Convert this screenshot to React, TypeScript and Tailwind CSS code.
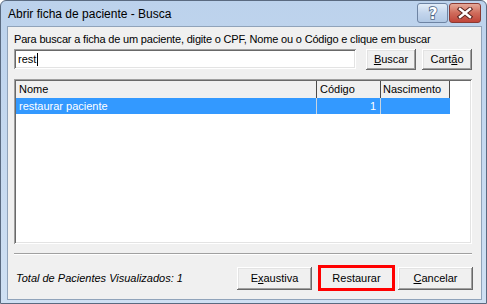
import React from "react";

const raised =
  "shadow-[inset_-1px_-1px_#696969,inset_1px_1px_#ffffff,inset_-2px_-2px_#a0a0a0,inset_2px_2px_#e3e3e3]";
const sunken =
  "shadow-[inset_1px_1px_#a0a0a0,inset_-1px_-1px_#ffffff,inset_2px_2px_#696969,inset_-2px_-2px_#e3e3e3]";

function WinButton({ children, className = "" }: { children: React.ReactNode; className?: string }) {
  return (
    <div className={`flex items-center justify-center bg-[#f0f0f0] text-black ${raised} ${className}`}>
      {children}
    </div>
  );
}

function HelpButton() {
  return (
    <div className="flex h-[20px] w-[31px] items-center justify-center rounded-[3px] border border-[#6e84a3] bg-gradient-to-b from-[#e3edf8] via-[#c3d5ec] to-[#b1c8e4]">
      <svg width="14" height="17" viewBox="0 0 14 17">
        <text
          x="7"
          y="14"
          textAnchor="middle"
          fontFamily="'DejaVu Sans', sans-serif"
          fontWeight="bold"
          fontSize="15"
          fill="#ffffff"
          stroke="#4f6584"
          strokeWidth="1.6"
          paintOrder="stroke"
        >
          ?
        </text>
      </svg>
    </div>
  );
}

function CloseButton() {
  return (
    <div className="flex h-[20px] w-[32px] items-center justify-center rounded-[3px] border border-[#8a3a33] bg-gradient-to-b from-[#e4a999] via-[#cf6b5b] to-[#c0453a]">
      <svg width="16" height="12" viewBox="0 0 16 12">
        <path d="M3 2 L13 10 M13 2 L3 10" stroke="#5a241f" strokeWidth="4.4" strokeLinecap="square" />
        <path d="M3 2 L13 10 M13 2 L3 10" stroke="#ffffff" strokeWidth="2.4" strokeLinecap="square" />
      </svg>
    </div>
  );
}

export default function App() {
  return (
    <div className="h-[304px] w-[487px] overflow-hidden bg-white font-['Liberation_Sans',Arial,sans-serif] text-[11px] leading-[13px] text-black">
      <div className="flex h-[304px] w-[487px] flex-col rounded-t-[6px] border border-[#5a6a80] bg-gradient-to-b from-[#bcd2ec] to-[#cfe0f3] pb-[3px] pl-[6px] pr-[4px]">
        {/* title bar */}
        <div className="flex h-[25px] items-center justify-between">
          <span className="mt-[1px] pl-[1px] text-[12px] text-black">Abrir ficha de paciente - Busca</span>
          <div className="mr-[1px] flex items-start gap-[1px] self-start pt-[2px]">
            <HelpButton />
            <CloseButton />
          </div>
        </div>

        {/* client area */}
        <div className="flex flex-1 flex-col border border-[#90a3ba] bg-[#f0f0f0] pb-[7px] pl-[6px] pr-[8px] pt-[6px]">
          <div className="h-[13px] whitespace-nowrap tracking-[-0.18px]">
            Para buscar a ficha de um paciente, digite o CPF, Nome ou o Código e clique em buscar
          </div>

          <div className="mt-[3px] flex items-start">
            <div className={`flex h-[20px] w-[342px] items-center bg-white pl-[4px] ${sunken}`}>
              <span>rest</span>
              <span className="ml-[1px] h-[13px] w-[1px] bg-black" />
            </div>
            <WinButton className="ml-[10px] h-[21px] w-[50px]">
              <span>
                <span className="underline">B</span>uscar
              </span>
            </WinButton>
            <WinButton className="ml-[6px] h-[21px] w-[50px]">
              <span>
                Cart<span className="underline">ã</span>o
              </span>
            </WinButton>
          </div>

          {/* list */}
          <div className={`mt-[9px] h-[165px] w-[458px] bg-white p-[2px] ${sunken}`}>
            <div className="flex h-[17px]">
              <div className="flex w-[301px] items-center border-r border-[#4a4a4a] bg-[#f0f0f0] pl-[3px]">Nome</div>
              <div className="flex w-[64px] items-center border-r border-[#4a4a4a] bg-[#f0f0f0] pl-[3px]">Código</div>
              <div className="flex w-[69px] items-center border-r border-[#4a4a4a] bg-[#f0f0f0] pl-[2px]">Nascimento</div>
              <div className="flex-1 bg-white" />
            </div>
            <div className="flex h-[16px] text-white">
              <div className="flex w-[301px] items-center border-r border-[#c8d4e0] bg-[#3399ff] pl-[3px]">
                restaurar paciente
              </div>
              <div className="flex w-[64px] items-center justify-end border-r border-[#c8d4e0] bg-[#3399ff] pr-[4px]">
                1
              </div>
              <div className="w-[69px] bg-[#3399ff]" />
            </div>
          </div>

          {/* separator */}
          <div className="mt-[9px] h-[2px] w-[458px] border-b border-t border-b-white border-t-[#a0a0a0]" />

          {/* bottom row */}
          <div className="mt-[10px] flex items-center">
            <span className="pl-[2px] italic">Total de Pacientes Visualizados: 1</span>
            <div className="flex-1" />
            <WinButton className="h-[23px] w-[75px]">
              <span>
                E<span className="underline">x</span>austiva
              </span>
            </WinButton>
            <div className="ml-[6px] flex h-[26px] w-[77px] items-center justify-center border-[3px] border-[#ff0000] bg-[#f0f0f0]">
              Restaurar
            </div>
            <WinButton className="ml-[3px] h-[23px] w-[75px]">
              <span>
                <span className="underline">C</span>ancelar
              </span>
            </WinButton>
          </div>
        </div>
      </div>
    </div>
  );
}
